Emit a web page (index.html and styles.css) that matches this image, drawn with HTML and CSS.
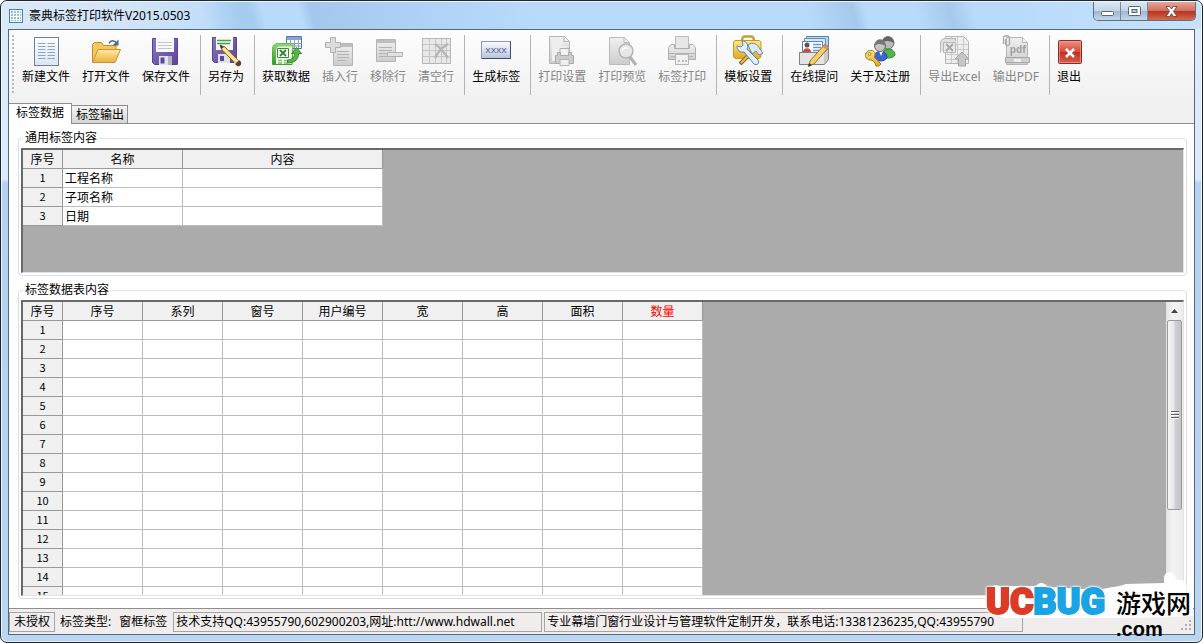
FILE: index.html
```html
<!DOCTYPE html>
<html lang="zh-CN">
<head>
<meta charset="utf-8">
<title>豪典标签打印软件V2015.0503</title>
<link rel="stylesheet" href="styles.css">
</head>
<body>
<div class="window">
  <header class="titlebar">
    <svg class="app-icon" width="14" height="14" viewBox="0 0 14 14"><rect x=".5" y=".5" width="13" height="13" fill="#fff" stroke="#3f83b5"/><path d="M2 2h2v2H2zM5 2h2v2H5zM8 2h2v2H8zM11 2h1v2h-1zM2 5h2v2H2zM5 5h2v2H5zM8 5h2v2H8zM11 5h1v2h-1zM2 8h2v2H2zM5 8h2v2H5zM8 8h2v2H8zM11 8h1v2h-1zM2 11h2v1H2zM5 11h2v1H5zM8 11h2v1H8zM11 11h1v1h-1z" fill="#8ec5ea"/></svg>
    <h1 class="title">豪典标签打印软件V2015.0503</h1>
    <div class="window-buttons">
      <button class="wbtn wbtn-min" aria-label="最小化"><svg width="13" height="6" viewBox="0 0 13 6"><rect x=".5" y=".5" width="12" height="4" rx="1" fill="#fff" stroke="#5a6572"/></svg></button>
      <button class="wbtn wbtn-max" aria-label="最大化"><svg width="13" height="11" viewBox="0 0 13 11"><rect x=".5" y=".5" width="12" height="9" rx="1" fill="#fff" stroke="#5a6572"/><rect x="4" y="3.500" width="5" height="3" fill="#b8c8da" stroke="#5a6572"/></svg></button>
      <button class="wbtn wbtn-close" aria-label="关闭"><svg width="13" height="11" viewBox="0 0 13 11"><path d="M1 .5h3.500L6.500 3 8.500.5H12L8.500 5.300 12 10.500H8.500L6.500 7.700 4.500 10.500H1L4.500 5.300z" fill="#fff" stroke="#6b4746" stroke-width=".9"/></svg></button>
    </div>
  </header>

  <main class="client">
    <svg class="defs" width="0" height="0" aria-hidden="true">
      <defs>
        <linearGradient id="folder" x2="0" y2="1"><stop stop-color="#ffe9a6"/><stop offset="1" stop-color="#efb03c"/></linearGradient>
        <linearGradient id="purple" x2="1" y2="1"><stop stop-color="#8a76c6"/><stop offset="1" stop-color="#5a459b"/></linearGradient>
        <linearGradient id="paper" x2="0" y2="1"><stop stop-color="#fff"/><stop offset="1" stop-color="#dbe5ef"/></linearGradient>
        <linearGradient id="gray" x2="0" y2="1"><stop stop-color="#eee"/><stop offset="1" stop-color="#c6c6c6"/></linearGradient>
        <linearGradient id="green" x2="0" y2="1"><stop stop-color="#8fd67a"/><stop offset="1" stop-color="#2f9a2c"/></linearGradient>
        <linearGradient id="label" x2="0" y2="1"><stop stop-color="#fbfcff"/><stop offset="1" stop-color="#b9c3dc"/></linearGradient>
        <linearGradient id="red" x2="0" y2="1"><stop stop-color="#ee9186"/><stop offset=".5" stop-color="#d6483a"/><stop offset=".5" stop-color="#c22d20"/><stop offset="1" stop-color="#d9604e"/></linearGradient>
        <linearGradient id="gold" x2="0" y2="1"><stop stop-color="#ffe98a"/><stop offset="1" stop-color="#e2a91c"/></linearGradient>
      </defs>
    </svg>
    <nav class="toolbar" aria-label="工具栏">
      <span class="grip"></span>
      <button class="tool"><svg class="icon" viewBox="0 0 32 32"><rect x="4.500" y="2.500" width="24" height="28" fill="url(#paper)" stroke="#6f8297"/><path d="M8 8.500h7.500M8 11.500h7.500M8 14.500h7.500M8 17.500h7.500M8 20.500h7.500M8 23.500h7.500M17.500 8.500H25M17.500 11.500H25M17.500 14.500H25M17.500 17.500H25M17.500 20.500H25M17.500 23.500H25" stroke="#8ba4cf"/></svg><span>新建文件</span></button>
      <button class="tool"><svg class="icon" viewBox="0 0 32 32"><path d="M2.500 27V9.500l2-2h7l2 3h12.500v4" fill="#f3c862" stroke="#c08c2b"/><path d="M2.500 27.500 8 14.500h22.500L25 27.500z" fill="url(#folder)" stroke="#c9942f"/><path d="M19 8.500c2-4 5.500-3.500 7.500-.5" fill="none" stroke="#476f95" stroke-width="1.500"/><path d="M28.500 4.500v6h-6z" fill="#476f95"/></svg><span>打开文件</span></button>
      <button class="tool"><svg class="icon" viewBox="0 0 32 32"><path d="M2.500 3.500h25v26h-23l-2-2z" fill="url(#purple)" stroke="#58448f"/><path d="M6 3h18v14H6z" fill="#f8f8fa"/><path d="M8 7.500h14M8 10.500h14M8 13.500h14" stroke="#c4c4c8"/><path d="M9 21h13v9H9z" fill="#e3e3ea"/><path d="M10.500 22.500h4v6h-4z" fill="#5d489e"/><path d="M18 21h4v9h-4z" fill="#b6b3c6"/></svg><span>保存文件</span></button>
      <span class="sep"></span>
      <button class="tool"><svg class="icon" viewBox="0 0 32 32"><path d="M2.500 2.500h24v25h-22l-2-2z" fill="url(#purple)" stroke="#58448f"/><path d="M6 2h17v13H6z" fill="#f8f8fa"/><path d="M7 5.500h14M7 8.500h13" stroke="#42a045" stroke-width="1.500"/><path d="M8 19h12v9H8z" fill="#dfdfe8"/><path d="M10 21h4v5h-4z" fill="#5d489e"/><path d="m10 10 2 5 14 14 3-3-14-14z" fill="#f1ce6c" stroke="#8e6a2c"/><path d="m12 12 15 15" stroke="#fff0b0" stroke-width="1.500"/><path d="m10 10 1 4 3-2z" fill="#3c3a37"/><path d="m25 29 4-4 2 2c1 3-2 5-4 4z" fill="#6c3a2c"/><path d="m24 28 4-4 1 1-4 4z" fill="#ddd"/></svg><span>另存为</span></button>
      <span class="sep"></span>
      <button class="tool"><svg class="icon" viewBox="0 0 32 32"><path d="M16.500 1.500h15v12h-15z" fill="#fff" stroke="#5277ae"/><path d="M17 2h14v3H17z" fill="#84a6d8"/><path d="M17 8.500h14M17 11h14M20.500 2v11M24.500 2v11M28.500 2v11" stroke="#87a2ca"/><path d="M8.500 8.500H23l-1 21H2.500v-15c0-4 2-6 6-6z" fill="#f1faec" stroke="#45a13b"/><path d="M2.500 15c0-4.500 2-6.500 6-6.500H23l-.3 3H10c-3 0-4 2-4 5v13H2.500z" fill="url(#green)"/><path d="M7.500 13.500h11v9h-11z" fill="#fff" stroke="#3a8d35"/><path d="m10 15 6 6M16 15l-6 6" stroke="#2c8e30" stroke-width="2"/><path d="M8 25.500h4M14 25.500h4M8 28h4M14 28h4" stroke="#7cbf6c" stroke-width="1.500"/><path d="M17.500 25c5 0 7-3 7-6.500h-3l5-6 5 6h-3c0 6-4 9.500-11 9.500z" fill="#58b83d" stroke="#348a27"/></svg><span>获取数据</span></button>
      <button class="tool" disabled><svg class="icon" viewBox="0 0 32 32"><path d="M9.500 8.500h19v22h-19z" fill="url(#gray)" stroke="#a9a9a9"/><path d="M10 9h18v3H10z" fill="#b4b4b4"/><path d="M13 16.500h12M13 19.500h12M13 22.500h12M13 25.500h9" stroke="#a6a6a6"/><path d="M6.500 2.500h5v5h5v5h-5v5h-5v-5h-5v-5h5z" fill="#d8d8d8" stroke="#a5a5a5"/></svg><span>插入行</span></button>
      <button class="tool" disabled><svg class="icon" viewBox="0 0 32 32"><path d="M4.500 4.500h19v22h-19z" fill="url(#gray)" stroke="#a9a9a9"/><path d="M5 5h18v3H5z" fill="#b4b4b4"/><path d="M7 12.500h13M7 15.500h13M7 18.500h9M7 21.500h9" stroke="#a6a6a6"/><path d="M15.500 17.500h15v4h-15z" fill="#dedede" stroke="#a5a5a5"/></svg><span>移除行</span></button>
      <button class="tool" disabled><svg class="icon" viewBox="0 0 32 32"><path d="M2.500 3.500h28v25h-28z" fill="#e6e6e6" stroke="#aaa"/><path d="M3 9.500h27M3 15.500h27M3 21.500h27M9.500 4v24M15.500 4v24M21.500 4v24M26.500 4v24" stroke="#bdbdbd"/><path d="M15 9c5 3 8 7 13 14M28 9c-6 3-10 8-13 14" fill="none" stroke="#aaa" stroke-width="2.500"/></svg><span>清空行</span></button>
      <span class="sep"></span>
      <button class="tool"><svg class="icon" viewBox="0 0 32 32"><rect x="1.500" y="6.500" width="29" height="17" fill="url(#label)" stroke="#8b98bb"/><path d="M2 23.500h28.500v-17" fill="none" stroke="#3f4d7c"/><text x="16" y="18" class="icon-label">XXXX</text></svg><span>生成标签</span></button>
      <span class="sep"></span>
      <button class="tool" disabled><svg class="icon" viewBox="0 0 32 32"><path d="M3.500 1.500h15l5 5v22h-20z" fill="url(#gray)" stroke="#a9a9a9"/><path d="M6 5h10v6h4v15H6z" fill="#ececec"/><path d="M18 1.500v5h5" fill="#eee" stroke="#aaa"/><path d="M14 13.500h9v7h-9z" fill="#f1f1f1" stroke="#a5a5a5"/><path d="M9.500 20.500h2v-3h3v3h8v-3h3v3h2v8h-18z" fill="#c4c4c4" stroke="#9c9c9c"/><path d="M14 24.500h9v6h-9z" fill="#eee" stroke="#aaa"/></svg><span>打印设置</span></button>
      <button class="tool" disabled><svg class="icon" viewBox="0 0 32 32"><path d="M3.500 2.500h15l5 5v22h-20z" fill="url(#gray)" stroke="#b0b0b0"/><path d="M18 2.500v5h5" fill="#f2f2f2" stroke="#aaa"/><path d="m24 22 6 8" stroke="#a5a5a5" stroke-width="3"/><circle cx="20" cy="16" r="7" fill="#e3e3e3" stroke="#aaa" stroke-width="1.500"/><path d="M16 16c1-3 3-4 6-3" fill="none" stroke="#fff" stroke-width="1.500"/></svg><span>打印预览</span></button>
      <button class="tool" disabled><svg class="icon" viewBox="0 0 32 32"><path d="M9.500 1.500h13v13h-13z" fill="#e4e4e4" stroke="#b0b0b0"/><path d="M2.500 12.500 5 9.500h3.500v4h15v-4H27l2.500 3v12h-27z" fill="url(#gray)" stroke="#a0a0a0"/><path d="M3 18.500h26M5 21.500h22" stroke="#aaa"/><path d="M9.500 19.500h13v10h-13z" fill="#f0f0f0" stroke="#aaa"/><path d="M12 25h2v2h-2zm4 0h2v2h-2zm3 0h2v2h-2z" fill="#b5b5b5"/></svg><span>标签打印</span></button>
      <span class="sep"></span>
      <button class="tool"><svg class="icon" viewBox="0 0 32 32"><path d="M10 6c0-3 1-4.500 3-4.500h6c2 0 3 1.500 3 4.500" fill="none" stroke="#c6a034" stroke-width="2.500"/><path d="M1.500 8c0-1.500 1-2.500 2.500-2.500h22c2 0 3 1 3 2.500v13c0 1.500-1 2.500-3 2.500H4c-1.500 0-2.500-1-2.500-2.500z" fill="url(#gold)" stroke="#c59b2a"/><path d="m8 29 14-14" stroke="#8e682f" stroke-width="4"/><path d="m9 28 13-13" stroke="#f1b94c" stroke-width="2"/><path d="M16 10c5-4 9-1 12 4l3 4-4 2-3-4-4 3z" fill="#dbe8f5" stroke="#6f8aaa"/><path d="m5 11 4 1 2-2-1-4c5 0 7 5 5 8l11 11c2 3-1 6-4 4L12 17c-4 1-7-2-7-6z" fill="#e1effa" stroke="#5a84ad"/></svg><span>模板设置</span></button>
      <span class="sep"></span>
      <button class="tool"><svg class="icon" viewBox="0 0 32 32"><path d="M8.500 1.500h22v16h-22z" fill="#b9d7f2" stroke="#5182b4"/><path d="M6.500 3.500h21v17h-21z" fill="#d6e9f8" stroke="#5f8fbd"/><path d="M4.500 6.500h20v16h-20z" fill="#fff" stroke="#5b84ae"/><path d="M15 9.500h8M15 12.500h8M15 15.500h8" stroke="#6794d4" stroke-width="1.500"/><circle cx="9" cy="10" r="2.500" fill="#5b5553"/><path d="M5 17c0-5 8-5 8 0z" fill="#c44d3f"/><path d="M1.500 17.500h25l4-4v11l-4 5h-25z" fill="#c9c9c9" stroke="#828282"/><path d="M2 18h24v11H2z" fill="#e3e3e3"/><path d="m27 9 4 3-15 17-5 2 1-5z" fill="#f4cf61" stroke="#94723a"/><path d="m27 9 4 3-2 3-4-3z" fill="#d98872"/><path d="m10 32 1-4 3 2z" fill="#333"/></svg><span>在线提问</span></button>
      <button class="tool"><svg class="icon" viewBox="0 0 32 32"><path d="M18 20c0-8 13-8 13 0-2 4-11 4-13 0z" fill="#4fb648" stroke="#328432"/><circle cx="24" cy="8" r="6" fill="#b9b9b9" stroke="#666"/><path d="M18 8c0-9 12-9 12 0-4-2-8-3-12 0z" fill="#646464"/><path d="M10 23c0-9 13-9 13 0-3 4-10 4-13 0z" fill="#3a67d8" stroke="#274396"/><path d="m15 16 2 5 2-5z" fill="#fff"/><circle cx="16" cy="11" r="5.500" fill="#c4c4c4" stroke="#666"/><path d="M10.500 11c0-9 11-9 11 0-4-2-7-3-11 0z" fill="#777"/><path d="M2 18c2-4 8-3 9 0 0 2 0 3-1 4l7 7-2 2h-3l-1-3-3-3c-5 1-8-4-6-7z" fill="url(#gold)" stroke="#a87b12"/><circle cx="5.500" cy="19" r="1.500" fill="#fff" stroke="#a87b12"/></svg><span>关于及注册</span></button>
      <span class="sep"></span>
      <button class="tool" disabled><svg class="icon" viewBox="0 0 32 32"><path d="M7.500 1.500h18l5 5v22h-23z" fill="#ededed" stroke="#aaa"/><path d="M8 9.500h22M8 14.500h22M8 19.500h22M8 24.500h22M13.500 2v26M19.500 2v26M25.500 2v26" stroke="#c3c3c3"/><path d="M2.500 17.500V8c0-3 2-4.500 5-4.500h10v3" fill="#ddd" stroke="#aaa"/><path d="M5.500 7.500h12v10h-12z" fill="#e6e6e6" stroke="#aaa"/><path d="m8 9 7 7M15 9l-7 7" stroke="#999" stroke-width="2"/><path d="m24 17 7 7h-3.500v7h-7v-7H17z" fill="#bdbdbd" stroke="#999"/></svg><span>导出Excel</span></button>
      <button class="tool" disabled><svg class="icon" viewBox="0 0 32 32"><path d="M6.500 2.500h16l5 5v22h-21z" fill="url(#gray)" stroke="#aaa"/><path d="M22.500 2.500v5h5" fill="#f3f3f3" stroke="#aaa"/><text x="18" y="18" class="icon-pdf">pdf</text><path d="M5.500 22.500h24v5h-24z" fill="#c8c8c8" stroke="#999"/><path d="M14 24h7v3h-7z" fill="#eee"/><path d="M5.500 4v5c0 2 4 2 4 0V3c0-3-6-3-6 0v6" fill="none" stroke="#999" stroke-width="1.300"/></svg><span>输出PDF</span></button>
      <span class="sep"></span>
      <button class="tool tool-exit"><svg class="icon" viewBox="0 0 32 32"><rect x="5.500" y="5.500" width="23" height="23" rx="1" fill="url(#red)" stroke="#8d2b23"/><rect x="6.500" y="6.500" width="21" height="21" fill="none" stroke="#ee9c92" stroke-opacity=".7"/><path d="m13 14 8 8M21 14l-8 8" stroke="#fff" stroke-width="2.500"/></svg><span>退出</span></button>
    </nav>

    <div class="tabs" role="tablist">
      <button class="tab tab-active" role="tab" aria-selected="true">标签数据</button>
      <button class="tab" role="tab" aria-selected="false">标签输出</button>
    </div>

    <section class="page">
      <fieldset class="group">
        <legend>通用标签内容</legend>
        <div class="grid">
          <table class="table table-common">
            <colgroup><col class="col-no"><col class="col-name"><col class="col-content"></colgroup>
            <thead><tr><th>序号</th><th>名称</th><th>内容</th></tr></thead>
            <tbody>
              <tr><th>1</th><td>工程名称</td><td></td></tr>
              <tr><th>2</th><td>子项名称</td><td></td></tr>
              <tr><th>3</th><td>日期</td><td></td></tr>
            </tbody>
          </table>
        </div>
      </fieldset>

      <fieldset class="group group-fill">
        <legend>标签数据表内容</legend>
        <div class="grid grid-scroll">
          <table class="table table-data">
            <colgroup><col class="col-no"><col span="8" class="col-data"></colgroup>
            <thead><tr><th>序号</th><th>序号</th><th>系列</th><th>窗号</th><th>用户编号</th><th>宽</th><th>高</th><th>面积</th><th class="required">数量</th></tr></thead>
            <tbody>
              <tr><th>1</th><td></td><td></td><td></td><td></td><td></td><td></td><td></td><td></td></tr>
              <tr><th>2</th><td></td><td></td><td></td><td></td><td></td><td></td><td></td><td></td></tr>
              <tr><th>3</th><td></td><td></td><td></td><td></td><td></td><td></td><td></td><td></td></tr>
              <tr><th>4</th><td></td><td></td><td></td><td></td><td></td><td></td><td></td><td></td></tr>
              <tr><th>5</th><td></td><td></td><td></td><td></td><td></td><td></td><td></td><td></td></tr>
              <tr><th>6</th><td></td><td></td><td></td><td></td><td></td><td></td><td></td><td></td></tr>
              <tr><th>7</th><td></td><td></td><td></td><td></td><td></td><td></td><td></td><td></td></tr>
              <tr><th>8</th><td></td><td></td><td></td><td></td><td></td><td></td><td></td><td></td></tr>
              <tr><th>9</th><td></td><td></td><td></td><td></td><td></td><td></td><td></td><td></td></tr>
              <tr><th>10</th><td></td><td></td><td></td><td></td><td></td><td></td><td></td><td></td></tr>
              <tr><th>11</th><td></td><td></td><td></td><td></td><td></td><td></td><td></td><td></td></tr>
              <tr><th>12</th><td></td><td></td><td></td><td></td><td></td><td></td><td></td><td></td></tr>
              <tr><th>13</th><td></td><td></td><td></td><td></td><td></td><td></td><td></td><td></td></tr>
              <tr><th>14</th><td></td><td></td><td></td><td></td><td></td><td></td><td></td><td></td></tr>
              <tr><th>15</th><td></td><td></td><td></td><td></td><td></td><td></td><td></td><td></td></tr>
            </tbody>
          </table>
          <div class="scrollbar">
            <button class="scroll-up" aria-label="向上滚动"><svg width="7" height="4" viewBox="0 0 7 4"><path d="M0 4 3.500 0 7 4z" fill="#444"/></svg></button>
            <div class="thumb"><span class="thumb-grip"></span></div>
          </div>
        </div>
      </fieldset>
    </section>

    <footer class="status">
      <span class="cell">未授权</span>
      <span class="plain">标签类型:</span>
      <span class="plain plain-value">窗框标签</span>
      <span class="cell cell-support">技术支持QQ:43955790,602900203,网址:htt://www.hdwall.net</span>
      <span class="cell cell-about">专业幕墙门窗行业设计与管理软件定制开发，联系电话:13381236235,QQ:43955790</span>
      <svg class="resize" width="12" height="12" viewBox="0 0 12 12"><path d="M8 0h2v2H8zM4 4h2v2H4zM8 4h2v2H8zM0 8h2v2H0zM4 8h2v2H4zM8 8h2v2H8z" fill="#b5b0b0"/></svg>
    </footer>
  </main>

  <div class="watermark">
    <svg class="watermark-back" width="212" height="50" viewBox="0 0 212 50"><path d="M2 20c2-6 6-8 12-6h36c3-4 8-4 12 1l50 3c12-3 20-3 28-6l38-1V6c0-7 9-8 11-1 1 4 5 2 9 4 4 3 2 10 2 17l7 4v14l-60 2H22C8 46 2 36 2 20z" fill="#fff"/></svg>
    <div class="brand"><span class="brand-red">UC</span><span class="brand-blue">BUG</span></div>
    <div class="brand-cn">游戏网</div>
    <div class="brand-com">.com</div>
  </div>
</div>
</body>
</html>
```
FILE: styles.css
```css
* { box-sizing: border-box; }

body {
  margin: 0;
  background: #fff;
  color: #000;
  font: 12px/16px "Noto Sans", "Noto Sans CJK SC", sans-serif;
}

button {
  margin: 0;
  padding: 0;
  border: 0;
  background: none;
  color: inherit;
  font: inherit;
}

.window {
  position: relative;
  display: flex;
  flex-direction: column;
  height: 100vh;
  padding: 0 7px 7px;
  overflow: hidden;
  border: 1px solid #1d2733;
  border-radius: 7px;
  background: linear-gradient(#dcebfb 0, #dcebfb 178px, #b4d2f1 182px, #b8d5f2 100%);
  box-shadow: inset 0 0 0 1px #e9f4fd;
}

/* Title bar */
.titlebar {
  display: flex;
  align-items: center;
  gap: 6px;
  height: 28px;
  margin: 0 -6px;
  padding: 0 5px 0 7px;
  border-top: 1px solid #eef6fe;
  border-radius: 6px 6px 0 0;
  background:
    linear-gradient(75deg, transparent 17%, #a5cbee 20%, #a5cbee 21%, transparent 22%, transparent 25%, #a3c8ec 26%, #aed3f6 36%, transparent 45%, transparent 67%, #a5c9eb 71%, transparent 72%, transparent 76%, #a5c9eb 79%, transparent 81%),
    linear-gradient(90deg, #dbe8f6 0, #d3e4f6 10%, #b9dbfb 20%, #b9dbfb 85%, #c8e1f9 100%);
}

.title {
  flex: 1;
  margin: 0;
  font-size: 12px;
  font-weight: 400;
}

.window-buttons {
  display: flex;
  align-self: flex-start;
  overflow: hidden;
  border: 1px solid #5f6f82;
  border-top: 0;
  border-radius: 0 0 5px 5px;
}

.wbtn {
  display: flex;
  align-items: center;
  justify-content: center;
  width: 27px;
  height: 18px;
  border-right: 1px solid #77889b;
  background: linear-gradient(#dbe7f3, #c3d4e6 48%, #9fb6ce 50%, #c0d6ec);
}

.wbtn-close {
  width: 47px;
  border-right: 0;
  background: linear-gradient(#e6a79b, #d0705f 48%, #b53420 50%, #d4694a);
}

.wbtn-min { padding-top: 5px; }

/* Client area */
.client {
  display: flex;
  flex: 1;
  flex-direction: column;
  min-height: 0;
  border: 1px solid #54687e;
  background: #f0f0f0;
}

.defs { position: absolute; }

/* Toolbar */
.toolbar {
  display: flex;
  height: 73px;
  padding: 5px 0 8px 3px;
  background: linear-gradient(#fdfdfd, #f0f0f0);
}

.grip {
  width: 4px;
  height: 58px;
  background: repeating-linear-gradient(#b8b8b8 0 2px, transparent 2px 4px) 0 0 / 2px 100% no-repeat;
}

.tool {
  display: flex;
  flex-direction: column;
  align-items: center;
  padding: 0 6px;
  white-space: nowrap;
}

.tool:disabled { color: #868686; }
.tool:disabled .icon { opacity: .85; }
.tool-exit { padding: 0 2px; }

.icon {
  display: block;
  width: 32px;
  height: 32px;
  margin-bottom: 2px;
}

.icon-label {
  fill: #35467c;
  font: 8px "Liberation Sans", sans-serif;
  text-anchor: middle;
}

.icon-pdf {
  fill: #909090;
  font: bold 10px "Noto Sans", sans-serif;
  text-anchor: middle;
}

.sep {
  width: 2px;
  margin: 0 0 0 4px;
  border-left: 1px solid #b4b4b4;
}

/* Tabs */
.tabs {
  display: flex;
  align-items: flex-end;
  height: 21px;
  border-bottom: 1px solid #8c8e94;
}

.tab {
  height: 18px;
  padding: 1px 3px 0 4px;
  border: 1px solid #8c8e94;
  border-left: 0;
  border-bottom: 0;
  background: linear-gradient(#f4f4f4, #d6d6d6);
}

.tab-active {
  height: 21px;
  margin-bottom: -1px;
  padding: 0 7px 2px;
  background: #fff;
}

.page {
  display: flex;
  flex: 1;
  flex-direction: column;
  gap: 6px;
  min-height: 0;
  padding: 6px 7px 9px 9px;
  border-bottom: 1px solid #8c8e94;
  background: #fff;
}

/* Group boxes */
.group {
  min-width: 0;
  margin: 0;
  padding: 2px;
  border: 1px solid #d5dfe5;
  border-radius: 4px;
}

.group-fill {
  display: flex;
  flex: 1;
  min-height: 0;
}

.group legend {
  margin-left: 2px;
  padding: 0 3px 0 2px;
}

.grid {
  display: flex;
  align-items: flex-start;
  min-height: 125px;
  overflow: hidden;
  border: solid #696969;
  border-width: 2px 1px 1px 2px;
  border-right-color: #e3e3e3;
  border-bottom-color: #e3e3e3;
  background: #ababab;
}

.grid-scroll {
  flex: 1;
  min-height: 0;
}

/* Tables */
.table {
  flex: none;
  border-spacing: 0;
  table-layout: fixed;
  background: #fff;
  font: 12px/16px "Noto Sans CJK SC", sans-serif;
}

.table-common { width: 360px; }
.table-data { width: 680px; }
.col-no { width: 40px; }
.col-name { width: 120px; }
.col-content { width: 200px; }
.col-data { width: 80px; }

.table th,
.table td {
  height: 19px;
  padding: 1px 2px;
  border: solid #bdbdbd;
  border-width: 0 1px 1px 0;
}

.table th {
  border-color: #999;
  background: #f0f0f0;
  font-weight: 400;
}

.table tbody th {
  padding: 0 2px 2px;
  font-size: 11px;
}

.table .required { color: #f00; }

/* Scroll bar */
.scrollbar {
  display: flex;
  flex-direction: column;
  align-self: stretch;
  width: 17px;
  margin-left: auto;
  background: linear-gradient(90deg, #e3e3e3, #f3f3f3 40%, #ececec);
}

.scroll-up {
  display: flex;
  align-items: center;
  justify-content: center;
  height: 18px;
}

.thumb {
  display: flex;
  flex: 0 1 65%;
  align-items: center;
  justify-content: center;
  margin: 0 1px;
  border: 1px solid #9a9a9a;
  border-radius: 2px;
  background: linear-gradient(90deg, #f5f5f5, #e6e6e8 45%, #cfcfd4 55%, #c2c2c8);
}

.thumb-grip {
  width: 8px;
  height: 8px;
  background: repeating-linear-gradient(#606060 0 1px, #fff 1px 2px, transparent 2px 3px);
}

/* Status bar */
.status {
  display: flex;
  gap: 2px;
  padding: 3px 1px 2px 0;
  background: #f0edec;
  white-space: nowrap;
}

.cell {
  height: 20px;
  padding: 1px 4px;
  border: 1px solid #a5a3a3;
}

.cell-support {
  flex: 0 1 369px;
  padding: 1px 2px;
}

.cell-about {
  flex: 0 1 479px;
  padding: 1px 2px;
}

.plain { padding: 2px 3px 0; }
.plain-value { padding-right: 4px; }

.resize {
  align-self: flex-end;
  margin-left: auto;
}

/* Logo laid over the window's corner */
.watermark {
  position: absolute;
  right: 4px;
  bottom: 4px;
  display: grid;
  grid-template: 38px 20px / 130px 78px;
  width: 212px;
}

.watermark-back {
  position: absolute;
  right: 0;
  bottom: 16px;
}

.brand,
.brand-cn,
.brand-com { position: relative; }

.brand {
  align-self: end;
  font: 900 36px/32px Roboto, sans-serif;
  -webkit-text-stroke: 2px;
  filter: drop-shadow(0 0 1px #fff) drop-shadow(0 0 1px #fff);
}

.brand-red {
  color: #dc3b26;
  -webkit-text-stroke-color: #dc3b26;
}

.brand-blue {
  color: #1ba4e4;
  -webkit-text-stroke-color: #1ba4e4;
}

.brand-cn {
  align-self: end;
  font: 500 25px/32px "Noto Sans CJK SC", sans-serif;
}

.brand-com {
  grid-column: 2;
  align-self: end;
  font: bold 20px/18px "Liberation Sans", sans-serif;
}
```
